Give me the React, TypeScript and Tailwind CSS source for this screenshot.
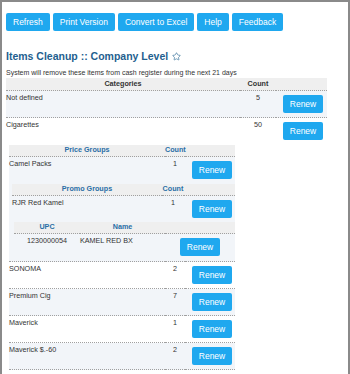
import { Star } from 'lucide-react';

const toolbar = ['Refresh', 'Print Version', 'Convert to Excel', 'Help', 'Feedback'];

const priceRows = [
  { name: 'SONOMA', count: 2 },
  { name: 'Premium Cig', count: 7 },
  { name: 'Maverick', count: 1 },
  { name: 'Maverick $.-60', count: 2 },
];

function RenewButton({ center = false }: { center?: boolean }) {
  return (
    <button
      className={`block h-[18px] w-[40px] rounded-[2px] bg-[#1fa8ef] text-[8.5px] leading-none text-white ${
        center ? 'mx-auto' : 'ml-auto'
      }`}
    >
      Renew
    </button>
  );
}

const th = 'pt-0 pb-[1px] font-bold leading-[10px] text-center text-[#2a6ea6]';
const td = 'align-top pt-[1.5px] leading-[10px]';
const tdBtn = 'align-top pt-[4px] pb-[4px] pr-[3px] leading-none';
const light = 'bg-[#f2f5f9]';
const dotted = 'border-b border-dotted border-[#a0a0a0]';

export default function App() {
  return (
    <div className="min-h-[400px] w-[350px] border-2 border-[#8a8a8a] bg-white pb-6 font-['Liberation_Sans',Arial,sans-serif] text-[7.2px] text-[#333]">
      <div className="flex gap-[3px] pl-[4px] pt-[11px]">
        {toolbar.map((label) => (
          <button
            key={label}
            className="h-[18px] rounded-[2px] bg-[#1fa8ef] px-[7px] text-[8.5px] leading-none text-white"
          >
            {label}
          </button>
        ))}
      </div>

      <h1 className="mt-[19px] flex items-center gap-[4px] pl-[4px] text-[10.5px] font-bold leading-[13px] text-[#1f5f8f]">
        Items Cleanup :: Company Level
        <Star size={9} strokeWidth={1.6} />
      </h1>
      <p className="mt-[5px] pl-[4px] leading-[9px] text-[7px]">
        System will remove these items from cash register during the next 21 days
      </p>

      <table className="ml-[4px] mt-[1px] w-[321px] table-fixed border-collapse">
        <colgroup>
          <col className="w-[234px]" />
          <col className="w-[36px]" />
          <col className="w-[51px]" />
        </colgroup>
        <thead>
          <tr className={`bg-[#efefef] ${dotted}`}>
            <th className="pt-[1px] pb-[1px] font-bold leading-[10px]">Categories</th>
            <th className="pt-[1px] pb-[1px] font-bold leading-[10px]">Count</th>
            <th />
          </tr>
        </thead>
        <tbody>
          <tr className={`${light} ${dotted}`}>
            <td className={td}>Not defined</td>
            <td className={`${td} text-center`}>5</td>
            <td className={`${tdBtn} pr-[4px]`}>
              <RenewButton />
            </td>
          </tr>
          <tr>
            <td className={td}>Cigarettes</td>
            <td className={`${td} text-center`}>50</td>
            <td className={`${tdBtn} pr-[4px] pb-[3px]`}>
              <RenewButton />
            </td>
          </tr>
          <tr>
            <td colSpan={3} className="pl-[3px] pt-[1px]">
              <table className="w-[226px] table-fixed border-collapse">
                <colgroup>
                  <col className="w-[156px]" />
                  <col className="w-[20px]" />
                  <col className="w-[50px]" />
                </colgroup>
                <thead>
                  <tr className={`bg-[#efefef] ${dotted}`}>
                    <th className={th}>Price Groups</th>
                    <th className={th}>Count</th>
                    <th />
                  </tr>
                </thead>
                <tbody>
                  <tr className={light}>
                    <td className={td}>Camel Packs</td>
                    <td className={`${td} text-center`}>1</td>
                    <td className={`${tdBtn} pb-[3px]`}>
                      <RenewButton />
                    </td>
                  </tr>
                  <tr className={`${light} ${dotted}`}>
                    <td colSpan={3} className="pl-[3px] pt-[1px] pb-[2px]">
                      <table className="w-[223px] table-fixed border-collapse">
                        <colgroup>
                          <col className="w-[150px]" />
                          <col className="w-[22px]" />
                          <col className="w-[51px]" />
                        </colgroup>
                        <thead>
                          <tr className={`bg-[#efefef] ${dotted}`}>
                            <th className={th}>Promo Groups</th>
                            <th className={th}>Count</th>
                            <th />
                          </tr>
                        </thead>
                        <tbody>
                          <tr className={light}>
                            <td className={td}>RJR Red Kamel</td>
                            <td className={`${td} text-center`}>1</td>
                            <td className={`${tdBtn} pb-[3px]`}>
                              <RenewButton />
                            </td>
                          </tr>
                          <tr className={light}>
                            <td colSpan={3} className="pl-[2px] leading-none">
                              <table className="w-[221px] table-fixed border-collapse">
                                <colgroup>
                                  <col className="w-[66px]" />
                                  <col className="w-[85px]" />
                                  <col className="w-[70px]" />
                                </colgroup>
                                <thead>
                                  <tr className={`bg-[#efefef] ${dotted}`}>
                                    <th className={th}>UPC</th>
                                    <th className={th}>Name</th>
                                    <th />
                                  </tr>
                                </thead>
                                <tbody>
                                  <tr className={light}>
                                    <td className={`${td} text-center`}>1230000054</td>
                                    <td className={td}>KAMEL RED BX</td>
                                    <td className="align-top pt-[4px] pb-[3px] leading-none">
                                      <RenewButton center />
                                    </td>
                                  </tr>
                                </tbody>
                              </table>
                            </td>
                          </tr>
                        </tbody>
                      </table>
                    </td>
                  </tr>
                  {priceRows.map((row, i) => (
                    <tr key={row.name} className={`${i % 2 === 1 ? light : ''} ${dotted}`}>
                      <td className={td}>{row.name}</td>
                      <td className={`${td} text-center`}>{row.count}</td>
                      <td className={tdBtn}>
                        <RenewButton />
                      </td>
                    </tr>
                  ))}
                </tbody>
              </table>
            </td>
          </tr>
        </tbody>
      </table>
    </div>
  );
}
